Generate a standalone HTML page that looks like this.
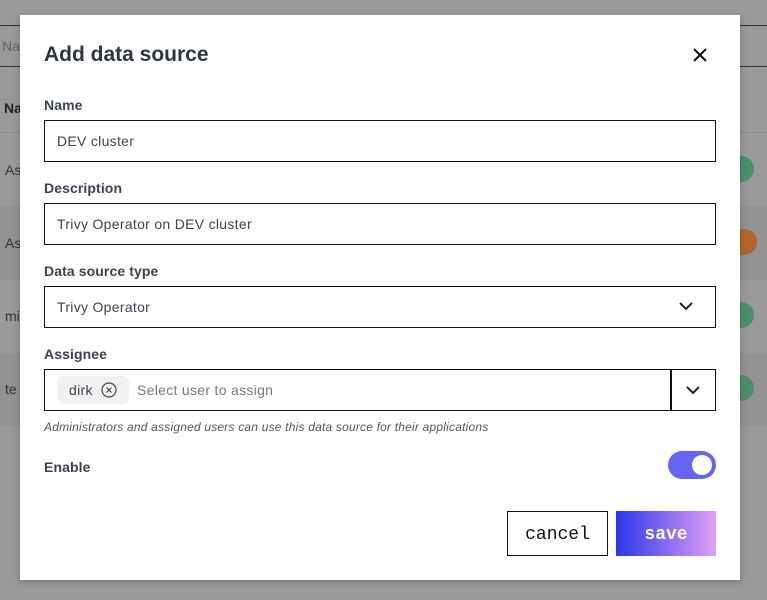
<!DOCTYPE html>
<html><head><style>
*{box-sizing:border-box;margin:0;padding:0}
body{width:767px;height:600px;background:#999;font-family:"Liberation Sans",sans-serif;position:relative;overflow:hidden;color:#333}
.bg{position:absolute;left:0;width:767px}
.modal{position:absolute;left:20px;top:15px;width:720px;height:565px;background:#fff;box-shadow:0 2px 6px rgba(0,0,0,.25)}
.lbl{position:absolute;left:24px;font-size:14px;font-weight:bold;color:#3c4250;letter-spacing:0.1px}
.inp{position:absolute;left:24px;width:672px;height:42px;border:1.5px solid #111;font-size:14px;color:#3c4250;padding-left:12px;line-height:40px;letter-spacing:0.3px}
</style></head><body>
<div class="bg" style="top:25px;height:42px;border-top:1px solid #333;border-bottom:1px solid #333"></div>
<div style="position:absolute;left:2px;top:38px;color:#666;font-size:14px">Na</div>
<div style="position:absolute;left:4px;top:100px;color:#222;font-weight:bold;font-size:14px">Na</div>
<div class="bg" style="top:132px;height:1px;background:#8a8a8a"></div>
<div class="bg" style="top:206px;height:74px;background:#929292"></div>
<div class="bg" style="top:353px;height:73px;background:#929292"></div>
<div style="position:absolute;left:5px;top:162px;color:#333;font-size:14px">As</div>
<div style="position:absolute;left:5px;top:235px;color:#333;font-size:14px">As</div>
<div style="position:absolute;left:5px;top:308px;color:#333;font-size:14px">mi</div>
<div style="position:absolute;left:5px;top:381px;color:#333;font-size:14px">te</div>
<div style="position:absolute;left:728px;top:156px;width:26px;height:26px;border-radius:13px;background:#4a8f6a"></div>
<div style="position:absolute;left:728px;top:229px;width:29px;height:26px;border-radius:13px;background:#b0652e"></div>
<div style="position:absolute;left:728px;top:302px;width:26px;height:26px;border-radius:13px;background:#4a8f6a"></div>
<div style="position:absolute;left:728px;top:375px;width:26px;height:26px;border-radius:13px;background:#4a8f6a"></div>
<div class="modal">
<div style="position:absolute;left:24px;top:28px;font-size:21px;font-weight:bold;color:#2e3440">Add data source</div>
<svg style="position:absolute;left:673px;top:33px" width="14" height="14"><path d="M1 1L13 13M13 1L1 13" stroke="#111" stroke-width="2"/></svg>
<div class="lbl" style="top:82px">Name</div>
<div class="inp" style="top:105px">DEV cluster</div>
<div class="lbl" style="top:165px">Description</div>
<div class="inp" style="top:188px">Trivy Operator on DEV cluster</div>
<div class="lbl" style="top:248px">Data source type</div>
<div class="inp" style="top:271px">Trivy Operator
<svg style="position:absolute;right:22px;top:15px" width="14" height="9"><path d="M1 1L7 7L13 1" stroke="#222" stroke-width="2" fill="none"/></svg></div>
<div class="lbl" style="top:331px">Assignee</div>
<div class="inp" style="top:354px;padding-left:0">
<div style="position:absolute;left:12px;top:6px;width:72px;height:28px;background:#f1f1f1;border-radius:6px;line-height:28px;padding-left:12px">dirk
<svg style="position:absolute;left:44px;top:6px" width="16" height="16"><circle cx="8" cy="8" r="7" stroke="#444" stroke-width="1.2" fill="none"/><path d="M5.5 5.5L10.5 10.5M10.5 5.5L5.5 10.5" stroke="#444" stroke-width="1.2"/></svg></div>
<span style="position:absolute;left:92px;color:#777">Select user to assign</span>
<div style="position:absolute;left:625px;top:0;width:1.5px;height:40px;background:#111"></div>
<svg style="position:absolute;right:15px;top:16px" width="14" height="9"><path d="M1 1L7 7L13 1" stroke="#222" stroke-width="2" fill="none"/></svg></div>
<div style="position:absolute;left:24px;top:405px;font-size:12px;font-style:italic;color:#555;letter-spacing:0.2px">Administrators and assigned users can use this data source for their applications</div>
<div class="lbl" style="top:444px">Enable</div>
<div style="position:absolute;left:648px;top:436px;width:48px;height:28px;border-radius:14px;background:#6366f1"><div style="position:absolute;right:4px;top:4px;width:20px;height:20px;border-radius:10px;background:#fff"></div></div>
<div style="position:absolute;left:487px;top:496px;width:101px;height:45px;border:1.5px solid #111;font-family:'Liberation Mono',monospace;font-size:18px;text-align:center;line-height:46px;color:#111">cancel</div>
<div style="position:absolute;left:596px;top:496px;width:100px;height:45px;background:linear-gradient(90deg,#2a36e8,#e0a0f5);font-family:'Liberation Mono',monospace;font-size:18px;font-weight:bold;text-align:center;line-height:49px;color:#fff">save</div>
</div>
</body></html>
